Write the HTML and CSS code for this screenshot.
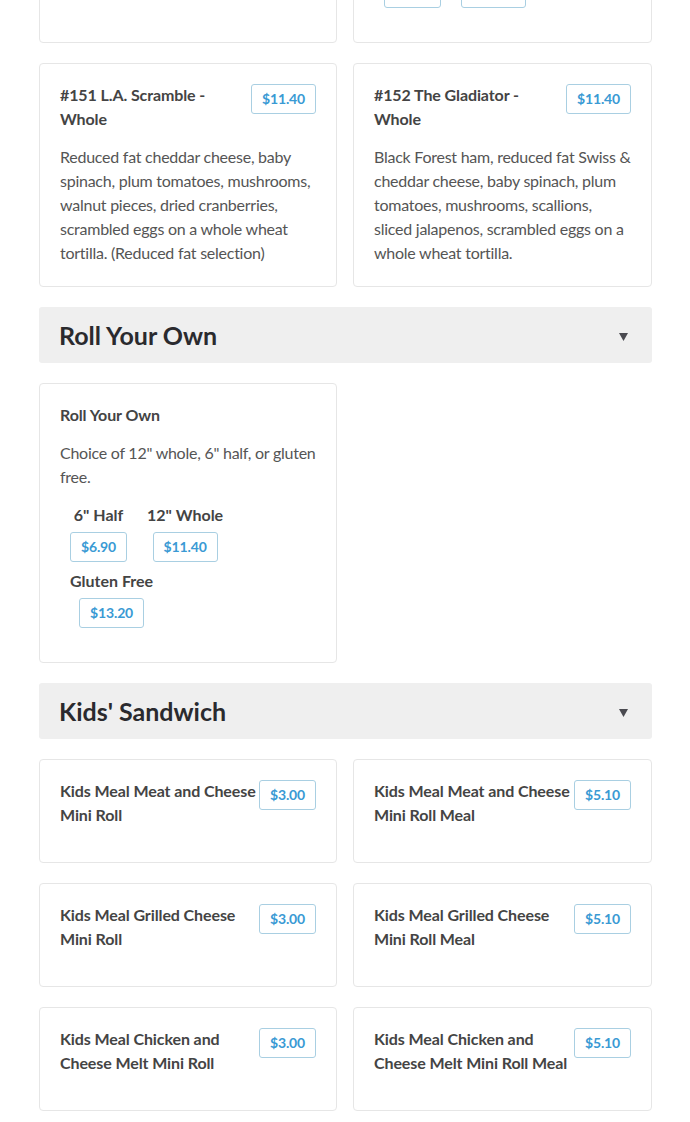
FILE: index.html
```html
<!DOCTYPE html>
<html lang="en">
<head>
<meta charset="utf-8">
<title>Menu</title>
<link rel="stylesheet" href="styles.css">
</head>
<body>
<main class="menu">
  <div class="grid">
    <div class="card">
      <div class="card-head">
        <h3 class="item-title">#150 The Bayou Chicken</h3>
        <span class="price">$11.40</span>
      </div>
      <p class="item-desc">Grilled chicken, pepper jack cheese, peppers and scrambled eggs.</p>
    </div>
    <div class="card">
      <div class="card-head">
        <h3 class="item-title">Breakfast Wrap</h3>
      </div>
      <p class="item-desc">Choice of half or whole, served warm on your choice of bread.</p>
      <div class="options">
        <div class="option"><span class="option-label">Half</span><span class="price">$6.90</span></div>
        <div class="option"><span class="option-label">Whole</span><span class="price">$11.40</span></div>
      </div>
    </div>
    <div class="card">
      <div class="card-head">
        <h3 class="item-title">#151 L.A. Scramble - Whole</h3>
        <span class="price">$11.40</span>
      </div>
      <p class="item-desc">Reduced fat cheddar cheese, baby spinach, plum tomatoes, mushrooms, walnut pieces, dried cranberries, scrambled eggs on a whole wheat tortilla. (Reduced fat selection)</p>
    </div>
    <div class="card">
      <div class="card-head">
        <h3 class="item-title">#152 The Gladiator - Whole</h3>
        <span class="price">$11.40</span>
      </div>
      <p class="item-desc">Black Forest ham, reduced fat Swiss &amp; cheddar cheese, baby spinach, plum tomatoes, mushrooms, scallions, sliced jalapenos, scrambled eggs on a whole wheat tortilla.</p>
    </div>
  </div>

  <div class="section-head">
    <h2 class="section-title">Roll Your Own</h2>
    <svg class="caret" width="9" height="9" viewBox="0 0 9 9"><polygon points="0,1 9,1 4.5,9" fill="#4a4a50"/></svg>
  </div>
  <div class="grid">
    <div class="card">
      <div class="card-head">
        <h3 class="item-title">Roll Your Own</h3>
      </div>
      <p class="item-desc">Choice of 12" whole, 6" half, or gluten free.</p>
      <div class="options">
        <div class="option"><span class="option-label">6" Half</span><span class="price">$6.90</span></div>
        <div class="option"><span class="option-label">12" Whole</span><span class="price">$11.40</span></div>
        <div class="option"><span class="option-label">Gluten Free</span><span class="price">$13.20</span></div>
      </div>
    </div>
  </div>

  <div class="section-head">
    <h2 class="section-title">Kids' Sandwich</h2>
    <svg class="caret" width="9" height="9" viewBox="0 0 9 9"><polygon points="0,1 9,1 4.5,9" fill="#4a4a50"/></svg>
  </div>
  <div class="grid">
    <div class="card">
      <div class="card-head">
        <h3 class="item-title">Kids Meal Meat and Cheese Mini Roll</h3>
        <span class="price">$3.00</span>
      </div>
      <p class="item-desc"></p>
    </div>
    <div class="card">
      <div class="card-head">
        <h3 class="item-title">Kids Meal Meat and Cheese Mini Roll Meal</h3>
        <span class="price">$5.10</span>
      </div>
      <p class="item-desc"></p>
    </div>
    <div class="card">
      <div class="card-head">
        <h3 class="item-title">Kids Meal Grilled Cheese Mini Roll</h3>
        <span class="price">$3.00</span>
      </div>
      <p class="item-desc"></p>
    </div>
    <div class="card">
      <div class="card-head">
        <h3 class="item-title">Kids Meal Grilled Cheese Mini Roll Meal</h3>
        <span class="price">$5.10</span>
      </div>
      <p class="item-desc"></p>
    </div>
    <div class="card">
      <div class="card-head">
        <h3 class="item-title">Kids Meal Chicken and Cheese Melt Mini Roll</h3>
        <span class="price">$3.00</span>
      </div>
      <p class="item-desc"></p>
    </div>
    <div class="card">
      <div class="card-head">
        <h3 class="item-title">Kids Meal Chicken and Cheese Melt Mini Roll Meal</h3>
        <span class="price">$5.10</span>
      </div>
      <p class="item-desc"></p>
    </div>
  </div>
</main>
</body>
</html>
```
FILE: styles.css
```css
* { box-sizing: border-box; }

html, body {
  margin: 0;
  padding: 0;
  background: #ffffff;
}

body {
  font-family: Lato, "Open Sans", "Liberation Sans", sans-serif;
  font-size: 16px;
  line-height: 24px;
  color: #555555;
}

/* page is shown scrolled: the first row of cards starts above the viewport */
.menu {
  width: 613px;
  margin: -171px 0 40px 39px;
  display: flex;
  flex-direction: column;
  gap: 20px;
}

.grid {
  display: grid;
  grid-template-columns: 298px 299px;
  column-gap: 16px;
  row-gap: 20px;
}

.card {
  border: 1px solid #e6e6e6;
  border-radius: 4px;
  padding: 19px 20px 21px 20px;
  background: #fff;
}

.card-head {
  display: flex;
  align-items: flex-start;
  justify-content: space-between;
}

.card-head .price {
  margin-top: 1px;
}

.item-title {
  margin: 0;
  flex: 1;
  font-size: 16px;
  line-height: 24px;
  font-weight: 700;
  letter-spacing: -0.1px;
  color: #444444;
}

.item-desc {
  margin: 14px 0 0 0;
  color: #555555;
  letter-spacing: -0.25px;
}

.price {
  flex: none;
  display: inline-block;
  height: 30px;
  padding: 0 10px;
  border: 1px solid #a9cfe2;
  border-radius: 3px;
  font-size: 14px;
  line-height: 28px;
  font-weight: 700;
  letter-spacing: -0.15px;
  color: #3a9ad4;
  background: #fff;
}

.options {
  display: flex;
  flex-wrap: wrap;
  row-gap: 7px;
  margin-top: 14px;
  padding-bottom: 13px;
}

.option {
  display: flex;
  flex-direction: column;
  align-items: center;
  gap: 5px;
  margin: 0 10px;
}

.option-label {
  font-weight: 700;
  color: #444444;
  line-height: 24px;
}

.section-head {
  display: flex;
  align-items: center;
  justify-content: space-between;
  height: 56px;
  padding: 0 24px 0 20px;
  background: #efefef;
  border-radius: 3px;
}

.section-title {
  margin: 0;
  font-size: 25px;
  line-height: 28px;
  font-weight: 700;
  color: #2a2a2e;
}

.caret {
  display: block;
  margin-top: 2px;
}
```
